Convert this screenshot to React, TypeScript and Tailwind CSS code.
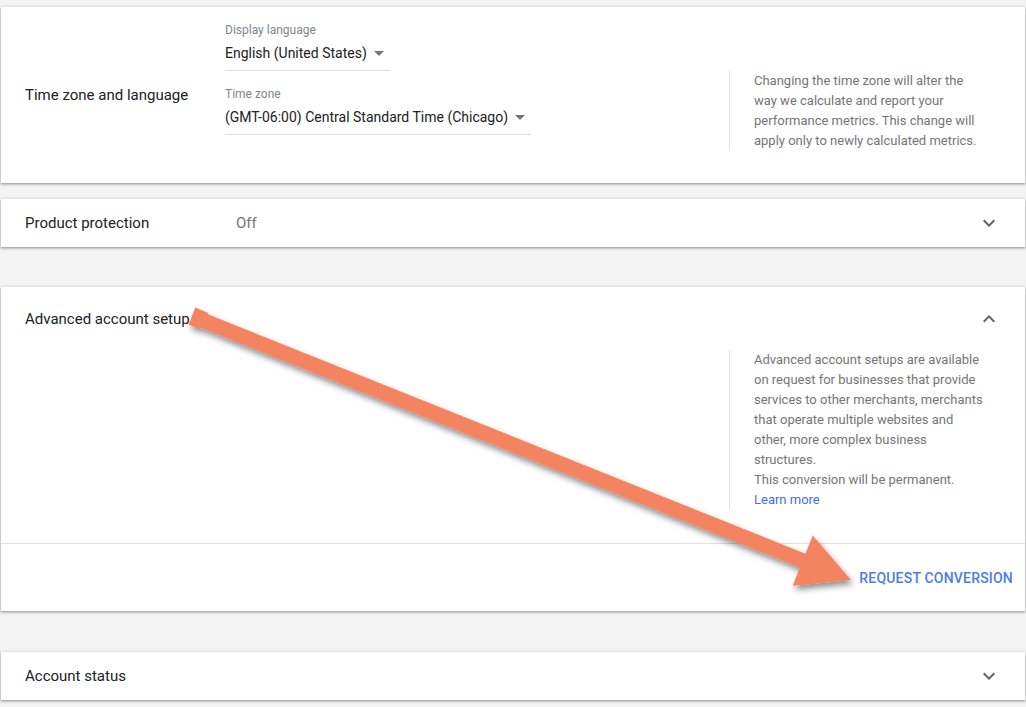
import React from "react";

const ChevronDown = () => (
  <svg width="24" height="24" viewBox="0 0 24 24" className="fill-[#5f6368]">
    <path d="M16.59 8.59L12 13.17 7.41 8.59 6 10l6 6 6-6z" />
  </svg>
);
const ChevronUp = () => (
  <svg width="24" height="24" viewBox="0 0 24 24" className="fill-[#5f6368]">
    <path d="M12 8l-6 6 1.41 1.41L12 10.83l4.59 4.58L18 14z" />
  </svg>
);
const DropArrow = () => (
  <svg width="24" height="24" viewBox="0 0 24 24" className="fill-[#757575] -my-1 shrink-0">
    <path d="M7 10l5 5 5-5z" />
  </svg>
);

const card = "mx-px bg-white shadow-[0_1px_2px_rgba(0,0,0,0.3),0_1px_3px_1px_rgba(0,0,0,0.12)]";

function Arrow() {
  const S = [192, 316];
  const T = [851, 580];
  const dx = T[0] - S[0];
  const dy = T[1] - S[1];
  const L = Math.hypot(dx, dy);
  const u = [dx / L, dy / L];
  const n = [-u[1], u[0]];
  const hl = 52;
  const hw = 27;
  const sw = 7.5;
  const B = [T[0] - hl * u[0], T[1] - hl * u[1]];
  const p = (x: number[], a: number, b: number) =>
    `${(x[0] + a * u[0] + b * n[0]).toFixed(1)},${(x[1] + a * u[1] + b * n[1]).toFixed(1)}`;
  const pts = [
    p(S, 0, -9),
    p(S, 14, -9),
    p(S, 14, -sw),
    p(B, 0, -sw),
    p(B, 0, -hw),
    p(T, 0, 0),
    p(B, 0, hw),
    p(B, 0, sw),
    p(S, 14, sw),
    p(S, 8, sw + 2),
    p(S, 0, 9),
  ].join(" ");
  return (
    <svg className="absolute left-0 top-0 pointer-events-none" width="1026" height="707">
      <defs>
        <filter id="sh" x="-10%" y="-10%" width="120%" height="130%">
          <feDropShadow dx="2" dy="4" stdDeviation="3" floodColor="#000" floodOpacity="0.45" />
        </filter>
      </defs>
      <polygon points={pts} fill="#f4845f" filter="url(#sh)" />
    </svg>
  );
}

export default function App() {
  return (
    <div className="relative w-[1026px] h-[707px] overflow-hidden bg-[#f3f3f3] font-['Roboto',sans-serif] text-[#212121]">
      <div className="pt-[7px] flex flex-col">
        {/* Card 1 */}
        <div className={`${card} h-[176px] flex`}>
          <div className="w-[224px] pl-6 flex items-center text-[15px]">Time zone and language</div>
          <div className="w-[504px] pt-[15px] flex flex-col items-start">
            <div className="text-xs leading-4 text-[#80868b]">Display language</div>
            <div className="mt-[5px] w-[165px] pb-[7px] border-b border-[#e0e0e0] flex items-center text-[14px] leading-5 whitespace-nowrap">
              <span>English (United States)</span>
              <DropArrow />
            </div>
            <div className="mt-[15px] text-xs leading-4 text-[#80868b]">Time zone</div>
            <div className="mt-[5px] w-[306px] pb-[7px] border-b border-[#e0e0e0] flex items-center text-[14px] leading-5 whitespace-nowrap">
              <span>(GMT-06:00) Central Standard Time (Chicago)</span>
              <DropArrow />
            </div>
          </div>
          <div className="flex-1 pt-[64px]">
            <div className="border-l border-[#e0e0e0] pl-6 text-[13px] leading-5 text-[#757575] whitespace-nowrap">
              <p>
                Changing the time zone will alter the<br />
                way we calculate and report your<br />
                performance metrics. This change will<br />
                apply only to newly calculated metrics.
              </p>
            </div>
          </div>
        </div>

        {/* Card 2 */}
        <div className={`${card} mt-4 h-12 flex items-center pl-6 pr-6`}>
          <div className="w-[211px] text-[15px]">Product protection</div>
          <div className="flex-1 text-[15px] text-[#757575]">Off</div>
          <ChevronDown />
        </div>

        {/* Card 3 */}
        <div className={`${card} mt-10 flex flex-col`}>
          <div className="h-[63px] flex items-center pl-6 pr-6">
            <div className="flex-1 text-[15px] pt-px">Advanced account setup</div>
            <ChevronUp />
          </div>
          <div className="flex pb-[33px]">
            <div className="w-[728px]" />
            <div className="border-l border-[#e0e0e0] pl-6 text-[13px] leading-5 text-[#757575] whitespace-nowrap">
              <p>
                Advanced account setups are available<br />
                on request for businesses that provide<br />
                services to other merchants, merchants<br />
                that operate multiple websites and<br />
                other, more complex business<br />
                structures.
              </p>
              <p>This conversion will be permanent.</p>
              <p className="text-[#3f6fe6]">Learn more</p>
            </div>
          </div>
          <div className="border-t border-[#e0e0e0] h-[68px] flex items-center justify-end pr-3">
            <span className="text-[14px] font-medium text-[#4a7cf0] tracking-[0.2px] pt-[2px]">REQUEST CONVERSION</span>
          </div>
        </div>

        {/* Card 4 */}
        <div className={`${card} mt-[41px] h-12 flex items-center pl-6 pr-6`}>
          <div className="flex-1 text-[15px]">Account status</div>
          <ChevronDown />
        </div>
      </div>
      <Arrow />
    </div>
  );
}
